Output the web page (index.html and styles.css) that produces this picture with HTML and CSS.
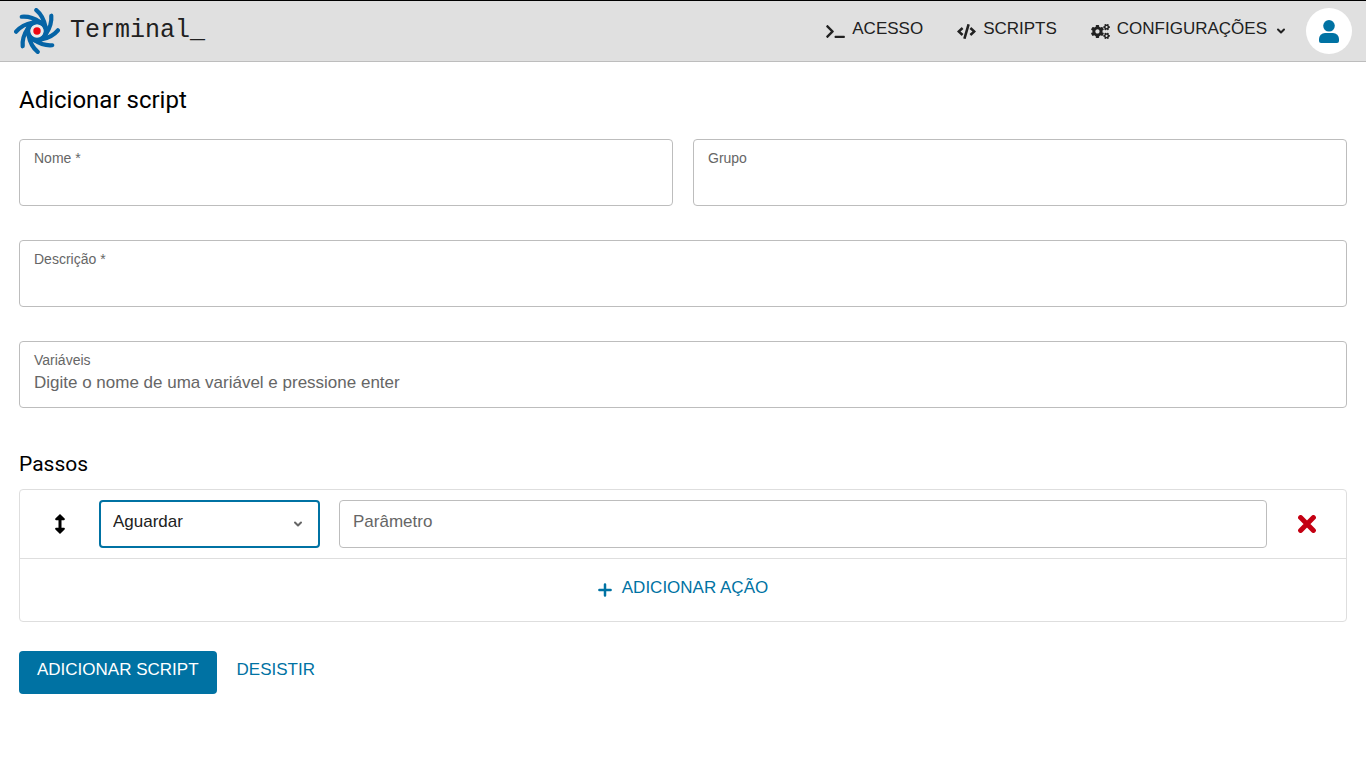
FILE: index.html
```html
<!DOCTYPE html>
<html lang="pt-BR">
<head>
<meta charset="utf-8">
<meta name="viewport" content="width=device-width, initial-scale=1">
<title>Terminal_ – Adicionar script</title>
<link rel="stylesheet" href="styles.css">
</head>
<body>
<header class="topbar">
  <a class="brand" href="#">
    <svg class="brand-logo" viewBox="0 0 46 46" aria-hidden="true">
      <defs>
        <path id="blade" d="M22.300 2.100C27 6 30 11 31.500 19"/>
      </defs>
      <g fill="none" stroke="#0564a6" stroke-width="4.200" stroke-linecap="round">
        <use href="#blade"/>
        <use href="#blade" transform="rotate(45 23 23)"/>
        <use href="#blade" transform="rotate(90 23 23)"/>
        <use href="#blade" transform="rotate(135 23 23)"/>
        <use href="#blade" transform="rotate(180 23 23)"/>
        <use href="#blade" transform="rotate(225 23 23)"/>
        <use href="#blade" transform="rotate(270 23 23)"/>
        <use href="#blade" transform="rotate(315 23 23)"/>
        <circle cx="23" cy="23" r="9" stroke-width="5"/>
      </g>
      <circle cx="23" cy="23" r="6.600" fill="#e8eaec"/>
      <circle cx="23" cy="23" r="3.700" fill="#ee0612"/>
    </svg>
    <span class="brand-name">Terminal_</span>
  </a>
  <nav class="menu">
    <a class="menu-item" href="#">
      <svg class="menu-icon" viewBox="0 0 640 512" aria-hidden="true"><path d="M257.981 272.971L63.638 467.314c-9.373 9.373-24.569 9.373-33.941 0L7.029 444.647c-9.357-9.357-9.375-24.522-.04-33.901L161.011 256 6.990 101.255c-9.335-9.379-9.317-24.544.04-33.901l22.667-22.667c9.373-9.373 24.569-9.373 33.941 0L257.981 239.030c9.373 9.372 9.373 24.568 0 33.941zM640 456v-32c0-13.255-10.745-24-24-24H312c-13.255 0-24 10.745-24 24v32c0 13.255 10.745 24 24 24h304c13.255 0 24-10.745 24-24z"/></svg>
      <span>ACESSO</span>
    </a>
    <a class="menu-item" href="#">
      <svg class="menu-icon" viewBox="0 0 640 512" aria-hidden="true"><path d="M278.900 511.500l-61-17.700c-6.400-1.800-10-8.500-8.200-14.900L346.200 8.700c1.800-6.400 8.500-10 14.900-8.200l61 17.700c6.400 1.800 10 8.500 8.200 14.900L293.800 503.300c-1.900 6.400-8.500 10.100-14.900 8.200zm-114-112.200l43.500-46.400c4.600-4.900 4.300-12.700-.8-17.200L117 256l90.600-79.700c5.100-4.500 5.500-12.300.8-17.200l-43.500-46.400c-4.500-4.800-12.100-5.100-17-.5L3.800 247.200c-5.100 4.700-5.100 12.800 0 17.500l144.100 135.100c4.900 4.600 12.500 4.400 17-.5zm327.200.6l144.100-135.100c5.100-4.700 5.100-12.800 0-17.500L492.100 112.100c-4.800-4.500-12.400-4.300-17 .5L431.600 159c-4.600 4.900-4.300 12.700.8 17.200L523 256l-90.600 79.700c-5.100 4.500-5.500 12.300-.8 17.200l43.500 46.400c4.500 4.900 12.100 5.100 17 .6z"/></svg>
      <span>SCRIPTS</span>
    </a>
    <a class="menu-item" href="#">
      <svg class="menu-icon" viewBox="0 0 640 512" aria-hidden="true"><path d="M512.1 191l-8.2 14.3c-3 5.3-9.4 7.5-15.1 5.4-11.8-4.4-22.6-10.7-32.1-18.6-4.6-3.8-5.8-10.5-2.8-15.7l8.2-14.3c-6.9-8-12.3-17.3-15.900-27.400h-16.500c-6 0-11.200-4.300-12.200-10.300-2-12-2.100-24.600 0-37.100 1-6 6.200-10.400 12.200-10.400h16.500c3.600-10.100 9-19.400 15.900-27.400l-8.200-14.300c-3-5.200-1.900-11.900 2.800-15.700 9.500-7.900 20.400-14.200 32.100-18.600 5.700-2.100 12.100.1 15.100 5.400l8.200 14.300c10.500-1.900 21.200-1.900 31.700 0L552 6.300c3-5.300 9.400-7.500 15.100-5.400 11.800 4.400 22.600 10.700 32.100 18.600 4.600 3.800 5.800 10.500 2.800 15.700l-8.200 14.300c6.900 8 12.300 17.300 15.900 27.400h16.500c6 0 11.200 4.300 12.200 10.300 2 12 2.100 24.600 0 37.100-1 6-6.200 10.400-12.200 10.400h-16.500c-3.600 10.100-9 19.400-15.900 27.400l8.200 14.300c3 5.200 1.900 11.900-2.800 15.700-9.500 7.900-20.400 14.200-32.100 18.600-5.700 2.100-12.100-.1-15.100-5.400l-8.200-14.300c-10.400 1.900-21.200 1.900-31.700 0zm-10.500-58.800c38.500 29.600 82.400-14.300 52.800-52.800-38.500-29.700-82.400 14.300-52.800 52.800zM386.300 286.100l33.700 16.800c10.100 5.800 14.500 18.100 10.500 29.100-8.900 24.200-26.400 46.400-42.600 65.800-7.400 8.900-20.200 11.100-30.300 5.300l-29.100-16.800c-16 13.700-34.600 24.600-54.900 31.700v33.600c0 11.600-8.300 21.600-19.700 23.600-24.600 4.200-50.400 4.400-75.900 0-11.500-2-20-11.900-20-23.600V418c-20.300-7.200-38.900-18-54.900-31.700L74 403c-10 5.800-22.900 3.600-30.300-5.300-16.200-19.400-33.300-41.600-42.200-65.700-4-10.900.4-23.200 10.500-29.100l33.300-16.800c-3.900-20.900-3.900-42.400 0-63.400L12 205.800c-10.100-5.800-14.600-18.100-10.500-29 8.900-24.200 26-46.400 42.200-65.800 7.400-8.900 20.200-11.100 30.300-5.300l29.100 16.800c16-13.700 34.600-24.600 54.900-31.700V57.100c0-11.500 8.200-21.500 19.600-23.500 24.600-4.200 50.500-4.400 76-.1 11.500 2 20 11.900 20 23.600v33.600c20.300 7.200 38.900 18 54.900 31.700l29.100-16.800c10-5.800 22.900-3.600 30.300 5.300 16.200 19.400 33.200 41.600 42.100 65.800 4 10.900.1 23.200-10 29.100l-33.700 16.800c3.900 21 3.900 42.500 0 63.500zm-117.600 21.100c59.200-77-28.700-164.900-105.700-105.700-59.200 77 28.700 164.900 105.700 105.700zm243.400 182.700l-8.200 14.300c-3 5.300-9.400 7.500-15.100 5.400-11.800-4.400-22.600-10.700-32.100-18.600-4.600-3.800-5.800-10.500-2.800-15.700l8.200-14.300c-6.900-8-12.300-17.300-15.900-27.400h-16.500c-6 0-11.200-4.300-12.200-10.300-2-12-2.100-24.600 0-37.100 1-6 6.200-10.400 12.200-10.400h16.500c3.600-10.100 9-19.400 15.900-27.400l-8.200-14.300c-3-5.200-1.900-11.900 2.800-15.700 9.500-7.900 20.400-14.200 32.100-18.600 5.700-2.100 12.100.1 15.100 5.400l8.200 14.300c10.500-1.900 21.200-1.900 31.700 0l8.200-14.300c3-5.300 9.400-7.500 15.100-5.400 11.800 4.400 22.600 10.700 32.100 18.600 4.600 3.800 5.800 10.500 2.800 15.700l-8.200 14.300c6.900 8 12.300 17.300 15.900 27.400h16.500c6 0 11.200 4.300 12.200 10.300 2 12 2.100 24.600 0 37.100-1 6-6.200 10.400-12.200 10.400h-16.500c-3.600 10.100-9 19.400-15.900 27.400l8.200 14.300c3 5.200 1.900 11.900-2.800 15.700-9.500 7.900-20.400 14.200-32.100 18.600-5.700 2.100-12.100-.1-15.100-5.400l-8.200-14.300c-10.400 1.900-21.200 1.900-31.700 0zM501.600 431c38.500 29.600 82.400-14.300 52.800-52.800-38.500-29.600-82.400 14.300-52.800 52.800z"/></svg>
      <span>CONFIGURAÇÕES</span>
      <svg class="chevron" viewBox="0 0 10 10" aria-hidden="true"><path d="M2 3.500l3 3 3-3"/></svg>
    </a>
    <button class="avatar" type="button" aria-label="Conta do usuário">
      <svg class="avatar-icon" viewBox="0 0 20 23" aria-hidden="true"><circle cx="10" cy="5.800" r="5.800"/><path d="M6 13h8a6 6 0 0 1 6 6v2a2 2 0 0 1-2 2H2a2 2 0 0 1-2-2v-2a6 6 0 0 1 6-6z"/></svg>
    </button>
  </nav>
</header>

<main class="page">
  <h1 class="title">Adicionar script</h1>
  <form class="form">
    <div class="fields">
      <div class="field">
        <label class="field-label" for="nome">Nome *</label>
        <input class="field-input" id="nome" type="text">
      </div>
      <div class="field">
        <label class="field-label" for="grupo">Grupo</label>
        <input class="field-input" id="grupo" type="text">
      </div>
      <div class="field field-wide">
        <label class="field-label" for="descricao">Descrição *</label>
        <input class="field-input" id="descricao" type="text">
      </div>
      <div class="field field-wide">
        <label class="field-label" for="variaveis">Variáveis</label>
        <input class="field-input" id="variaveis" type="text" placeholder="Digite o nome de uma variável e pressione enter">
      </div>
    </div>

    <h2 class="subtitle">Passos</h2>
    <div class="steps">
      <div class="step">
        <button class="icon-button" type="button" aria-label="Mover passo">
          <svg class="move-icon" viewBox="0 0 10 20" aria-hidden="true"><path d="M5 0l4.600 4.600c.6.700.2 1.600-.6 1.600H6.500v7.600H9c.8 0 1.200.9.6 1.600L5 20 .4 15.400C-.2 14.700.2 13.800 1 13.800h2.500V6.200H1C.2 6.200-.2 5.300.4 4.600z"/></svg>
        </button>
        <div class="select-box">
          <select class="select" aria-label="Ação">
            <option>Aguardar</option>
          </select>
          <svg class="chevron select-chevron" viewBox="0 0 10 10" aria-hidden="true"><path d="M2 3.500l3 3 3-3"/></svg>
        </div>
        <input class="param" type="text" placeholder="Parâmetro" aria-label="Parâmetro">
        <button class="icon-button" type="button" aria-label="Remover passo">
          <svg class="remove-icon" viewBox="0 0 18 18" aria-hidden="true"><path d="M2.600 2.600l12.800 12.800M15.400 2.600L2.600 15.400"/></svg>
        </button>
      </div>
      <button class="add-step" type="button">
        <svg class="plus-icon" viewBox="0 0 14 14" aria-hidden="true"><path d="M7 1.400v11.200M1.400 7h11.200"/></svg>
        <span>ADICIONAR AÇÃO</span>
      </button>
    </div>

    <div class="actions">
      <button class="submit" type="submit">ADICIONAR SCRIPT</button>
      <a class="cancel" href="#">DESISTIR</a>
    </div>
  </form>
</main>
</body>
</html>
```
FILE: styles.css
```css
:root {
  --blue: #0072a3;
  --line: #bdbdbd;
  --line-soft: #dedede;
  --muted: #666;
  --ink: #212121;
}

* {
  box-sizing: border-box;
}

body {
  margin: 0;
  background: #fff;
  color: #000;
  font: 17px/20px "Liberation Sans", Arial, sans-serif;
}

a {
  text-decoration: none;
}

button,
input,
select {
  margin: 0;
  border: 0;
  padding: 0;
  background: none;
  font: inherit;
}

/* Top bar */
.topbar {
  display: flex;
  align-items: center;
  justify-content: space-between;
  padding: 7px 14px;
  border-top: 1px solid #000;
  border-bottom: 1px solid var(--line);
  background: #e0e0e0;
}

.brand {
  display: flex;
  align-items: center;
  gap: 10px;
  color: var(--ink);
}

.brand-logo {
  width: 46px;
  height: 46px;
}

.brand-name {
  font: 25px/30px "Liberation Mono", "Courier New", monospace;
}

.menu {
  display: flex;
  align-items: center;
  gap: 34px;
}

.menu-item {
  display: flex;
  align-items: center;
  gap: 7px;
  color: var(--ink);
}

.menu-item span,
.add-step span {
  padding-bottom: 4px;
}

.menu-icon {
  width: 19px;
  height: 15px;
  fill: currentColor;
}

.chevron {
  width: 10px;
  height: 10px;
  margin-left: 2px;
  fill: none;
  stroke: currentColor;
  stroke-width: 2;
  stroke-linecap: round;
  stroke-linejoin: round;
}

.avatar {
  display: grid;
  place-items: center;
  width: 46px;
  height: 46px;
  margin-left: -14px;
  border-radius: 50%;
  background: #fff;
}

.avatar-icon {
  width: 20px;
  height: 23px;
  fill: var(--blue);
}

/* Page */
.page {
  padding: 20px 19px;
}

.title {
  margin: 0;
  font: 400 24px/36px Roboto, sans-serif;
}

.fields {
  display: grid;
  grid-template-columns: 1fr 1fr;
  gap: 34px 20px;
  margin-top: 21px;
}

.field {
  display: flex;
  flex-direction: column;
  padding: 8px 14px 12px;
  border: 1px solid var(--line);
  border-radius: 4px;
}

.field-wide {
  grid-column: 1 / -1;
}

.field-label {
  color: var(--muted);
  font-size: 14px;
  line-height: 20px;
}

.field-input {
  width: 100%;
  height: 25px;
  outline: 0;
}

.field-input::placeholder,
.param::placeholder {
  color: var(--muted);
  opacity: 1;
}

.subtitle {
  margin: 41px 0 10px;
  font: 400 21px/30px Roboto, sans-serif;
}

/* Steps */
.steps {
  border: 1px solid var(--line-soft);
  border-radius: 4px;
}

.step {
  display: grid;
  grid-template-columns: 79px 221px 1fr 79px;
  align-items: center;
  padding: 10px 0;
  border-bottom: 1px solid var(--line-soft);
}

.icon-button {
  display: grid;
  place-items: center;
  height: 48px;
}

.move-icon {
  width: 10px;
  height: 20px;
}

.remove-icon {
  width: 18px;
  height: 18px;
  stroke: #c40012;
  stroke-width: 5;
  stroke-linecap: round;
}

.select-box {
  display: grid;
  align-items: center;
}

.select-box > * {
  grid-area: 1 / 1;
}

.select {
  width: 100%;
  height: 48px;
  padding: 0 32px 4px 12px;
  border: 2px solid var(--blue);
  border-radius: 4px;
  outline: 0;
  color: var(--ink);
  appearance: none;
}

.select-chevron {
  justify-self: end;
  margin-right: 17px;
  color: var(--muted);
  pointer-events: none;
}

.param {
  height: 48px;
  margin-left: 19px;
  padding: 0 13px 4px;
  border: 1px solid var(--line);
  border-radius: 4px;
  outline: 0;
}

.add-step {
  display: flex;
  align-items: center;
  justify-content: center;
  gap: 10px;
  width: 100%;
  height: 62px;
  color: var(--blue);
}

.plus-icon {
  width: 14px;
  height: 14px;
  stroke: currentColor;
  stroke-width: 2.5;
  stroke-linecap: round;
}

/* Form actions */
.actions {
  display: flex;
  align-items: center;
  gap: 20px;
  margin-top: 29px;
}

.submit,
.cancel {
  padding: 9px 0 14px;
  color: var(--blue);
}

.submit {
  padding: 9px 18px 14px;
  border-radius: 4px;
  background: var(--blue);
  color: #fff;
}
```
